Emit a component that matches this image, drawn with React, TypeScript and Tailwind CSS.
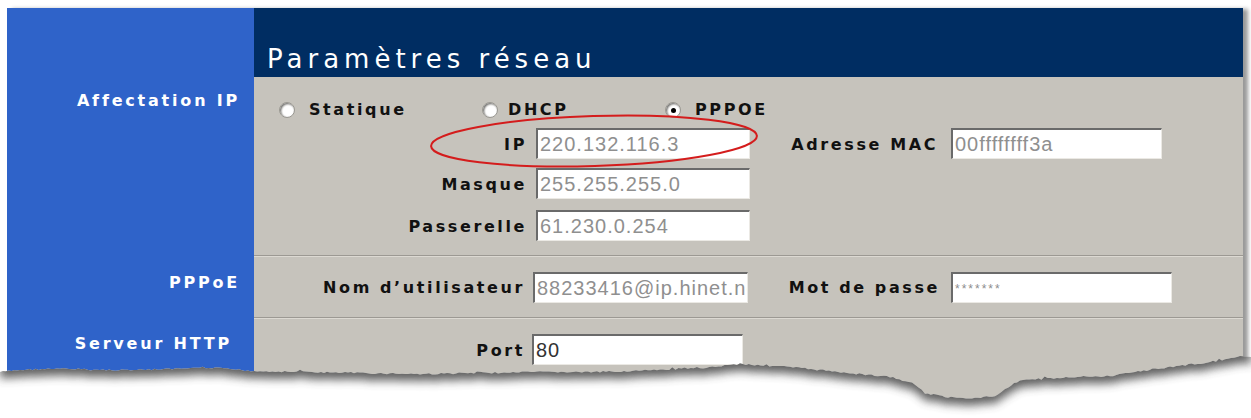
import React from "react";

const LBL = "font-['DejaVu_Sans',sans-serif] font-bold text-[16px] tracking-[2.6px] text-[#111] whitespace-nowrap leading-none";
const SIDE = "font-['DejaVu_Sans',sans-serif] font-bold text-[16px] tracking-[2.8px] text-white whitespace-nowrap leading-none";

function Input({ w, children, dark = false, small = false }: { w: string; children?: React.ReactNode; dark?: boolean; small?: boolean }) {
  return (
    <div
      className={
        "h-[31px] shrink-0 bg-white border-t-2 border-l-2 border-r border-b border-t-[#6a6a6a] border-l-[#6a6a6a] border-r-[#ebe9e4] border-b-[#ebe9e4] flex pl-[2px] overflow-hidden whitespace-nowrap font-['Liberation_Sans',Arial,sans-serif] " +
        w +
        (small
          ? " items-start pt-[6px] text-[12px] tracking-[2px] text-[#8d8d8d]"
          : dark
          ? " items-center text-[20px] tracking-[1px] text-[#333]"
          : " items-center text-[20px] tracking-[1px] text-[#8f8f8f]")
      }
    >
      {children}
    </div>
  );
}

function Radio({ checked = false }: { checked?: boolean }) {
  return (
    <div className="w-[16px] h-[16px] rounded-full bg-[radial-gradient(circle_at_60%_60%,#ffffff_45%,#e2e0da_75%)] border border-[#9a9892] shadow-[inset_1px_1px_2px_#6e6e6e] flex items-center justify-center shrink-0">
      {checked && <div className="w-[5px] h-[5px] rounded-full bg-black" />}
    </div>
  );
}

function Sep() {
  return (
    <div className="flex flex-col">
      <div className="h-[1px] bg-[#9c9993]" />
      <div className="h-[1px] bg-[#dcd9d2]" />
    </div>
  );
}

function rng(seed: number) {
  let s = seed;
  return () => {
    s = (s * 9301 + 49297) % 233280;
    return s / 233280;
  };
}

const base: [number, number][] = [
  [0, 372], [20, 370], [45, 369], [75, 369], [100, 370], [140, 370], [175, 369], [215, 368], [254, 371],
  [300, 372], [360, 373], [420, 374], [480, 373], [540, 372], [600, 372], [660, 370], [700, 368], [740, 364],
  [790, 367], [850, 373], [890, 377], [912, 383], [925, 393], [945, 397], [975, 398], [995, 396], [1005, 389],
  [1020, 380], [1060, 378], [1110, 376], [1135, 372], [1170, 367], [1210, 362], [1243, 357], [1251, 357],
];

function buildEdge(): [number, number][] {
  const r = rng(7);
  const pts: [number, number][] = [];
  for (let i = 0; i < base.length - 1; i++) {
    const [x0, y0] = base[i];
    const [x1, y1] = base[i + 1];
    const steps = Math.max(1, Math.round((x1 - x0) / 3));
    for (let k = 0; k < steps; k++) {
      const t = k / steps;
      const x = x0 + (x1 - x0) * t;
      const y = y0 + (y1 - y0) * t + (r() - 0.5) * 1.6 + (r() < 0.05 ? -2 * r() : 0);
      pts.push([x, y]);
    }
  }
  pts.push(base[base.length - 1]);
  return pts;
}

const TOP = 350;
const edge = buildEdge();
const below = "M" + edge.map(([x, y]) => `${x.toFixed(1)},${(y - TOP).toFixed(1)}`).join(" L") + ` L1251,${418 - TOP} L0,${418 - TOP} Z`;
const shadow =
  "M" + edge.map(([x, y]) => `${x.toFixed(1)},${(y - TOP + 7).toFixed(1)}`).join(" L") + ` L1251,-40 L0,-40 Z`;

export default function App() {
  return (
    <div className="relative w-[1251px] h-[418px] bg-white overflow-hidden">
      <div className="ml-[7px] mt-[8px] w-[1236px] h-[400px] flex flex-col shadow-[5px_1px_4px_rgba(0,0,0,0.4)]">
        {/* header */}
        <div className="flex h-[69px]">
          <div className="w-[247px] bg-[#2f63c9]" />
          <div className="flex-1 bg-[#002d62] flex items-end pl-[13px] pb-[5px]">
            <span className="font-['DejaVu_Sans',sans-serif] text-[26px] tracking-[5px] leading-none text-white">Paramètres réseau</span>
          </div>
        </div>
        {/* section 1 */}
        <div className="flex h-[180px]">
          <div className="w-[247px] bg-[#2f63c9] flex justify-end pr-[14px] pt-[16px]">
            <span className={SIDE}>Affectation IP</span>
          </div>
          <div className="flex-1 bg-[#c6c3bc] flex flex-col">
            <div className="flex-1 flex flex-col pt-[25px]">
              <div className="flex items-center h-[16px] pl-[25px]">
                <div className="w-[203px] flex items-center">
                  <Radio />
                  <span className={LBL + " ml-[14px]"}>Statique</span>
                </div>
                <div className="w-[183px] flex items-center">
                  <Radio />
                  <span className={LBL + " ml-[10px]"}>DHCP</span>
                </div>
                <div className="flex items-center">
                  <Radio checked />
                  <span className={LBL + " ml-[14px]"}>PPPOE</span>
                </div>
              </div>
              <div className="flex items-center mt-[10px]">
                <div className="w-[273px] text-right"><span className={LBL}>IP</span></div>
                <div className="ml-[9px]"><Input w="w-[214px]">220.132.116.3</Input></div>
                <div className="w-[201px] text-right pr-[13px]"><span className={LBL}>Adresse MAC</span></div>
                <Input w="w-[211px]">00ffffffff3a</Input>
              </div>
              <div className="flex items-center mt-[9px]">
                <div className="w-[273px] text-right"><span className={LBL}>Masque</span></div>
                <div className="ml-[9px]"><Input w="w-[214px]">255.255.255.0</Input></div>
              </div>
              <div className="flex items-center mt-[11px]">
                <div className="w-[273px] text-right"><span className={LBL}>Passerelle</span></div>
                <div className="ml-[9px]"><Input w="w-[214px]">61.230.0.254</Input></div>
              </div>
            </div>
            <Sep />
          </div>
        </div>
        {/* section 2 */}
        <div className="flex h-[62px]">
          <div className="w-[247px] bg-[#2f63c9] flex justify-end items-center pr-[14px] pb-[10px]">
            <span className={SIDE}>PPPoE</span>
          </div>
          <div className="flex-1 bg-[#c6c3bc] flex flex-col">
            <div className="flex-1 flex items-center">
              <div className="w-[271px] text-right"><span className={LBL}>Nom d’utilisateur</span></div>
              <div className="ml-[8px]"><Input w="w-[215px]">88233416@ip.hinet.net</Input></div>
              <div className="w-[203px] text-right pr-[11px]"><span className={LBL}>Mot de passe</span></div>
              <Input w="w-[221px]" small>*******</Input>
            </div>
            <Sep />
          </div>
        </div>
        {/* section 3 */}
        <div className="flex flex-1">
          <div className="w-[247px] bg-[#2f63c9] flex justify-end pr-[22px] pt-[17px]">
            <span className={SIDE}>Serveur HTTP</span>
          </div>
          <div className="flex-1 bg-[#c6c3bc] flex flex-col pt-[15px]">
            <div className="flex items-center">
              <div className="w-[271px] text-right"><span className={LBL}>Port</span></div>
              <div className="ml-[7px]"><Input w="w-[211px]" dark>80</Input></div>
            </div>
          </div>
        </div>
      </div>

      {/* red ellipse annotation */}
      <svg className="absolute left-0 top-0 pointer-events-none" width="1251" height="418">
        <ellipse cx="594" cy="141" rx="163" ry="25" fill="none" stroke="#d41c1c" strokeWidth="2" transform="rotate(-1.8 594 141)" />
      </svg>

      {/* torn bottom edge */}
      <svg className="absolute left-0 pointer-events-none top-[350px]" width="1251" height="68">
        <defs>
          <clipPath id="belowClip">
            <path d={below} />
          </clipPath>
          <filter id="blur" x="-5%" y="-50%" width="110%" height="200%">
            <feGaussianBlur stdDeviation="5" />
          </filter>
        </defs>
        <path d={below} fill="#ffffff" />
        <g clipPath="url(#belowClip)">
          <path d={shadow} fill="#444" opacity="0.85" filter="url(#blur)" />
        </g>
      </svg>
    </div>
  );
}
